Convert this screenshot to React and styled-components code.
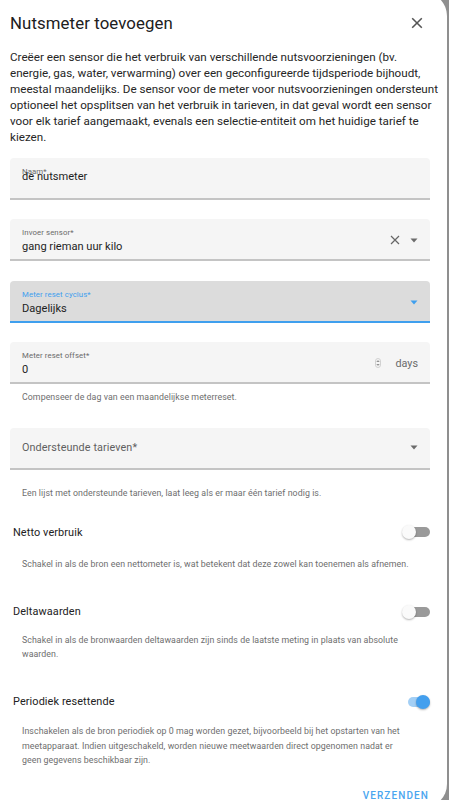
import React from "react";
import styled, { createGlobalStyle } from "styled-components";

const Global = createGlobalStyle`
  html, body { margin: 0; padding: 0; }
  body {
    background: #8f8f8f;
    font-family: Roboto, "Noto Sans", Arial, sans-serif;
    overflow: hidden;
  }
`;

const Dialog = styled.div`
  width: 447px;
  height: 816px;
  margin-top: -8px;
  background: #ffffff;
  border-radius: 0 24px 24px 0;
  box-sizing: border-box;
  padding: 8px 17px 0 10px;
  display: flex;
  flex-direction: column;
  color: #212121;
`;

const Header = styled.div`
  height: 46px;
  display: flex;
  align-items: center;
  justify-content: space-between;
`;

const Title = styled.h2`
  margin: 0;
  font-size: 16.8px;
  font-weight: 400;
  color: #202020;
  letter-spacing: 0.1px;
`;

const CloseButton = styled.button`
  border: 0;
  background: none;
  padding: 0;
  width: 22px;
  height: 22px;
  margin-right: 2px;
  display: flex;
  align-items: center;
  justify-content: center;
`;

const Description = styled.p`
  margin: 3px 0 0;
  font-size: 11.65px;
  line-height: 16px;
  color: #262626;
  white-space: nowrap;
`;

const Field = styled.div`
  margin-top: ${(p) => p.$mt}px;
  height: 42px;
  flex-shrink: 0;
  box-sizing: border-box;
  background: ${(p) => (p.$focused ? "#dcdcdc" : "#f5f5f5")};
  border-radius: 4px 4px 0 0;
  border-bottom: 2px solid ${(p) => (p.$focused ? "#3f9fee" : "#c4c4c4")};
  display: flex;
  align-items: ${(p) => (p.$placeholder ? "center" : "flex-start")};
  padding: ${(p) => (p.$placeholder ? "0" : "8px")} 12px 0 12px;
`;

const FieldBody = styled.div`
  flex: 1;
  display: flex;
  flex-direction: column;
  gap: 2px;
`;

const Label = styled.span`
  font-size: 7.8px;
  line-height: 11px;
  color: ${(p) => (p.$focused ? "#3f9fee" : "#6a6a6a")};
  letter-spacing: 0.1px;
`;

const Value = styled.span`
  font-size: 11.1px;
  line-height: 14px;
  color: #1e1e1e;
  margin-top: ${(p) => (p.$overlap ? "-9px" : "0")};
`;

const Placeholder = styled.span`
  flex: 1;
  font-size: 10.8px;
  color: #5f5f5f;
  letter-spacing: 0.1px;
`;

const Trailing = styled.div`
  display: flex;
  align-items: center;
  gap: 10px;
  align-self: center;
  margin-top: ${(p) => (p.$placeholder ? "0" : "-6px")};
`;

const Suffix = styled.span`
  font-size: 10.8px;
  color: #6a6a6a;
  margin-left: 4px;
`;

const Helper = styled.div`
  margin-top: ${(p) => p.$mt}px;
  padding: 0 12px;
  font-size: 8.8px;
  line-height: 14.6px;
  letter-spacing: 0.06px;
  color: #6e6e6e;
  white-space: nowrap;
`;

const ToggleRow = styled.div`
  margin-top: ${(p) => p.$mt}px;
  display: flex;
  align-items: center;
  justify-content: space-between;
  padding-left: 3px;
  height: 20px;
  flex-shrink: 0;
`;

const ToggleLabel = styled.span`
  font-size: 10.9px;
  color: #222;
  letter-spacing: 0.1px;
`;

const Switch = styled.div`
  position: relative;
  width: 28px;
  height: 14px;
  display: flex;
  align-items: center;
`;

const Track = styled.div`
  margin-left: 6px;
  width: 22px;
  height: 10px;
  border-radius: 5px;
  background: ${(p) => (p.$on ? "#a3cff5" : "#9a9a9a")};
`;

const Thumb = styled.div`
  position: absolute;
  top: 0;
  left: ${(p) => (p.$on ? "14px" : "0")};
  width: 14px;
  height: 14px;
  border-radius: 50%;
  background: ${(p) => (p.$on ? "#439fee" : "#fafafa")};
  box-shadow: 0 1px 2px rgba(0, 0, 0, 0.3);
`;

const Actions = styled.div`
  margin-top: 22px;
  display: flex;
  justify-content: flex-end;
`;

const TextButton = styled.button`
  border: 0;
  background: none;
  padding: 0 1px 0 0;
  font-family: Roboto, sans-serif;
  font-size: 10px;
  line-height: 12px;
  font-weight: 500;
  letter-spacing: 1.1px;
  color: #4aa6ef;
`;

const Caret = ({ color = "#6b6b6b" }) => (
  <svg width="8" height="5" viewBox="0 0 8 5">
    <path d="M0.5 0.5 L7.5 0.5 L4 4.5 Z" fill={color} />
  </svg>
);

const ClearIcon = ({ size = 10, color = "#666", sw = 1.2 }) => (
  <svg width={size} height={size} viewBox="0 0 10 10">
    <path d="M1 1 L9 9 M9 1 L1 9" stroke={color} strokeWidth={sw} />
  </svg>
);

const Spinner = () => (
  <svg width="6" height="10" viewBox="0 0 6 10">
    <rect x="0.5" y="0.5" width="5" height="9" rx="2.5" fill="none" stroke="#c8c8c8" strokeWidth="0.8" />
    <path d="M1.8 4 L3 2.7 L4.2 4 M1.8 6 L3 7.3 L4.2 6" fill="none" stroke="#555" strokeWidth="0.8" />
  </svg>
);

const Toggle = ({ on }) => (
  <Switch>
    <Track $on={on} />
    <Thumb $on={on} />
  </Switch>
);

export default function App() {
  return (
    <>
      <Global />
      <Dialog>
        <Header>
          <Title>Nutsmeter toevoegen</Title>
          <CloseButton aria-label="Sluiten">
            <ClearIcon size={12} color="#555" sw={1.3} />
          </CloseButton>
        </Header>
        <Description>
          Creëer een sensor die het verbruik van verschillende nutsvoorzieningen (bv.
          <br />
          energie, gas, water, verwarming) over een geconfigureerde tijdsperiode bijhoudt,
          <br />
          meestal maandelijks. De sensor voor de meter voor nutsvoorzieningen ondersteunt
          <br />
          optioneel het opsplitsen van het verbruik in tarieven, in dat geval wordt een sensor
          <br />
          voor elk tarief aangemaakt, evenals een selectie-entiteit om het huidige tarief te
          <br />
          kiezen.
        </Description>

        <Field $mt={13}>
          <FieldBody>
            <Label>Naam*</Label>
            <Value $overlap>de nutsmeter</Value>
          </FieldBody>
        </Field>

        <Field $mt={19}>
          <FieldBody>
            <Label>Invoer sensor*</Label>
            <Value>gang rieman uur kilo</Value>
          </FieldBody>
          <Trailing>
            <ClearIcon size={10} color="#666" />
            <Caret />
          </Trailing>
        </Field>

        <Field $mt={20} $focused>
          <FieldBody>
            <Label $focused>Meter reset cyclus*</Label>
            <Value>Dagelijks</Value>
          </FieldBody>
          <Trailing>
            <Caret color="#3f9fee" />
          </Trailing>
        </Field>

        <Field $mt={19}>
          <FieldBody>
            <Label>Meter reset offset*</Label>
            <Value>0</Value>
          </FieldBody>
          <Trailing>
            <Spinner />
            <Suffix>days</Suffix>
          </Trailing>
        </Field>
        <Helper $mt={6}>Compenseer de dag van een maandelijkse meterreset.</Helper>

        <Field $mt={23} $placeholder>
          <Placeholder>Ondersteunde tarieven*</Placeholder>
          <Trailing $placeholder>
            <Caret />
          </Trailing>
        </Field>
        <Helper $mt={16}>
          Een lijst met ondersteunde tarieven, laat leeg als er maar één tarief nodig is.
        </Helper>

        <ToggleRow $mt={22}>
          <ToggleLabel>Netto verbruik</ToggleLabel>
          <Toggle />
        </ToggleRow>
        <Helper $mt={15}>
          Schakel in als de bron een nettometer is, wat betekent dat deze zowel kan toenemen als afnemen.
        </Helper>

        <ToggleRow $mt={30}>
          <ToggleLabel>Deltawaarden</ToggleLabel>
          <Toggle />
        </ToggleRow>
        <Helper $mt={11}>
          Schakel in als de bronwaarden deltawaarden zijn sinds de laatste meting in plaats van absolute
          <br />
          waarden.
        </Helper>

        <ToggleRow $mt={30}>
          <ToggleLabel>Periodiek resettende</ToggleLabel>
          <Toggle on />
        </ToggleRow>
        <Helper $mt={12}>
          Inschakelen als de bron periodiek op 0 mag worden gezet, bijvoorbeeld bij het opstarten van het
          <br />
          meetapparaat. Indien uitgeschakeld, worden nieuwe meetwaarden direct opgenomen nadat er
          <br />
          geen gegevens beschikbaar zijn.
        </Helper>

        <Actions>
          <TextButton>VERZENDEN</TextButton>
        </Actions>
      </Dialog>
    </>
  );
}
